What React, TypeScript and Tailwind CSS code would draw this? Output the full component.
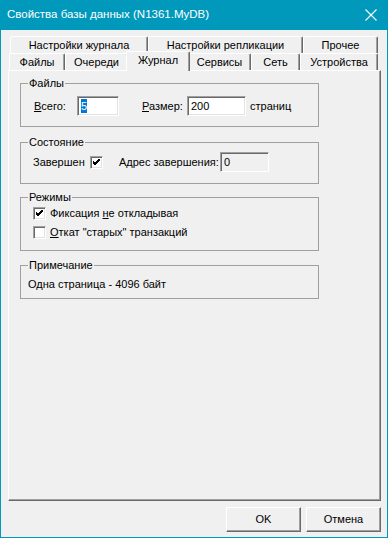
import React from 'react';

const sunken =
  'border border-t-[#a0a0a0] border-l-[#a0a0a0] border-b-white border-r-white shadow-[inset_1px_1px_0_#696969,inset_-1px_-1px_0_#e3e3e3]';

const Tab: React.FC<{ label: string; w: string; active?: boolean }> = ({ label, w, active }) => (
  <div
    className={`${w} ${
      active ? 'h-[20px] -mx-[2px] -mb-[1px] relative z-10 bg-[#f0f0f0]' : 'h-[17px]'
    } flex items-center justify-center shrink-0 whitespace-nowrap border-l border-t border-r border-l-white border-t-white border-r-[#696969] rounded-tl-[2px] rounded-tr-[2px] shadow-[inset_-1px_0_0_#a0a0a0]`}
  >
    <span className={active ? 'pb-[2px]' : ''}>{label}</span>
  </div>
);

const CheckBox: React.FC<{ checked?: boolean }> = ({ checked }) => (
  <div className={`w-[13px] h-[13px] bg-white shrink-0 flex items-center justify-center ${sunken}`}>
    {checked && (
      <svg width="7" height="7" viewBox="0 0 7 7">
        <path d="M0 3 L2 5 L7 0 M0 4 L2 6 L7 1 M0 2 L2 4 L7 -1" stroke="#000" strokeWidth="1" fill="none" />
      </svg>
    )}
  </div>
);

const Group: React.FC<{ title: string; h: string; mt: string; children: React.ReactNode }> = ({
  title,
  h,
  mt,
  children,
}) => (
  <fieldset className={`${h} ${mt} ml-[11px] w-[299px] border border-[#a0a0a0] whitespace-nowrap`}>
    <legend className="ml-[7px] px-[1px] leading-[14px]">{title}</legend>
    {children}
  </fieldset>
);

export default function App() {
  return (
    <div className="w-[388px] h-[538px] bg-[#0099bc] flex flex-col font-['Liberation_Sans',Arial,sans-serif] text-[11px] text-black">
      <div className="h-[30px] flex items-center justify-between pl-[7px] pr-[11px] text-white text-[11.5px]">
        <span>Свойства базы данных (N1361.MyDB)</span>
        <svg width="12" height="12" viewBox="0 0 12 12">
          <path d="M0.5 0.5 L11.5 11.5 M11.5 0.5 L0.5 11.5" stroke="#fff" strokeWidth="1.1" />
        </svg>
      </div>

      <div className="flex-1 mx-[1px] mb-[1px] bg-[#f0f0f0] flex flex-col pt-[6px]">
        {/* tab rows */}
        <div className="flex ml-[9px] h-[17px]">
          <Tab label="Настройки журнала" w="w-[138px]" />
          <Tab label="Настройки репликации" w="w-[155px]" />
          <Tab label="Прочее" w="w-[75px]" />
        </div>
        <div className="flex items-end ml-[8px] h-[17px]">
          <Tab label="Файлы" w="w-[56px]" />
          <Tab label="Очереди" w="w-[63px]" />
          <Tab label="Журнал" w="w-[64px]" active />
          <Tab label="Сервисы" w="w-[63px]" />
          <Tab label="Сеть" w="w-[49px]" />
          <Tab label="Устройства" w="w-[78px]" />
        </div>

        {/* tab page */}
        <div className="ml-[7px] w-[373px] h-[431px] border border-t-white border-l-white border-r-[#696969] border-b-[#696969] shadow-[inset_-1px_-1px_0_#a0a0a0] flex flex-col">
          <Group title="Файлы" h="h-[51px]" mt="mt-[5px]">
            <div className="flex items-center mt-[6px] pl-[13px]">
              <span className="w-[43px]">
                <u>В</u>сего:
              </span>
              <div className={`w-[42px] h-[20px] bg-white flex items-center pl-[3px] ${sunken}`}>
                <span className="bg-[#0078d7] text-white leading-[14px]">5</span>
              </div>
              <span className="ml-[23px] w-[45px]">
                <u>Р</u>азмер:
              </span>
              <div className={`w-[59px] h-[20px] bg-white flex items-center pl-[3px] ${sunken}`}>200</div>
              <span className="ml-[4px]">страниц</span>
            </div>
          </Group>

          <Group title="Состояние" h="h-[49px]" mt="mt-[8px]">
            <div className="flex items-center mt-[3px] pl-[12px]">
              <span className="w-[57px]">Завершен</span>
              <CheckBox checked />
              <span className="ml-[16px] w-[101px]">Адрес завершения:</span>
              <div className="w-[49px] h-[20px] bg-[#f0f0f0] flex items-center pl-[3px] border border-t-[#a0a0a0] border-l-[#a0a0a0] border-b-white border-r-white shadow-[inset_1px_1px_0_#696969]">
                0
              </div>
            </div>
          </Group>

          <Group title="Режимы" h="h-[61px]" mt="mt-[6px]">
            <div className="flex flex-col pl-[12px] mt-[3px] gap-[6px]">
              <div className="flex items-center gap-[4px] h-[13px]">
                <CheckBox checked />
                <span>
                  Фиксация <u>н</u>е откладывая
                </span>
              </div>
              <div className="flex items-center gap-[4px] h-[13px]">
                <CheckBox />
                <span>
                  <u>О</u>ткат "старых" транзакций
                </span>
              </div>
            </div>
          </Group>

          <Group title="Примечание" h="h-[41px]" mt="mt-[7px]">
            <div className="pl-[7px] mt-[4px]">Одна страница - 4096 байт</div>
          </Group>
        </div>

        {/* buttons */}
        <div className="flex justify-end gap-[5px] pr-[6px] mt-[6px]">
          <button className="w-[75px] h-[25px] bg-[#f0f0f0] border border-t-white border-l-white border-r-[#696969] border-b-[#696969] shadow-[inset_-1px_-1px_0_#a0a0a0]">
            OK
          </button>
          <button className="w-[75px] h-[25px] bg-[#f0f0f0] border border-t-white border-l-white border-r-[#696969] border-b-[#696969] shadow-[inset_-1px_-1px_0_#a0a0a0]">
            Отмена
          </button>
        </div>
      </div>
    </div>
  );
}
